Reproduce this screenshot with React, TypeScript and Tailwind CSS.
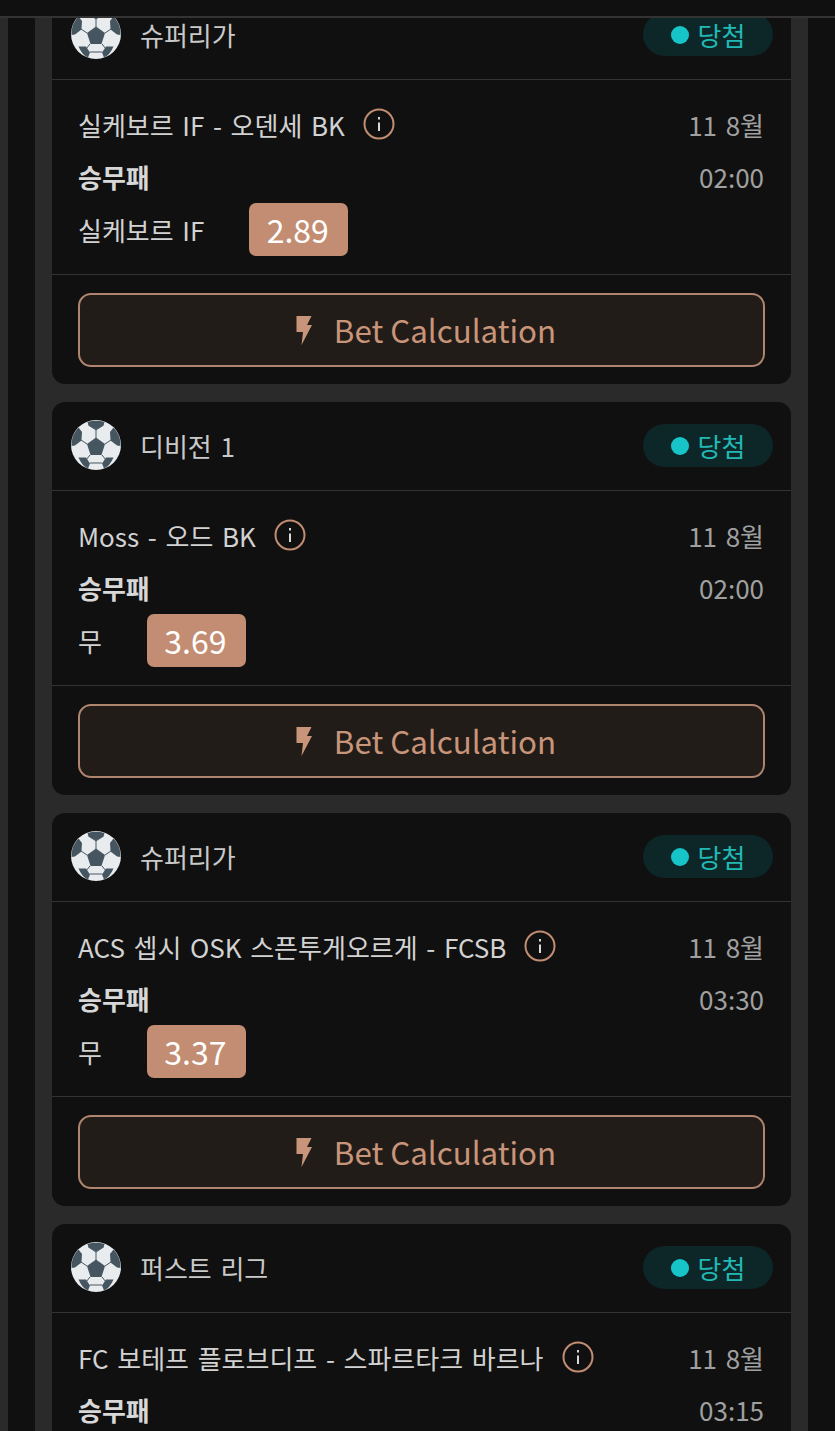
type Match = { league: string; title: string; time: string; pick?: string; odds?: string };

const matches: Match[] = [
  { league: '슈퍼리가', title: '실케보르 IF - 오덴세 BK', time: '02:00', pick: '실케보르 IF', odds: '2.89' },
  { league: '디비전 1', title: 'Moss - 오드 BK', time: '02:00', pick: '무', odds: '3.69' },
  { league: '슈퍼리가', title: 'ACS 셉시 OSK 스픈투게오르게 - FCSB', time: '03:30', pick: '무', odds: '3.37' },
  // last card runs off the bottom of the window
  { league: '퍼스트 리그', title: 'FC 보테프 플로브디프 - 스파르타크 바르나', time: '03:15' },
];

const SoccerBall = () => (
  <svg width="50" height="50" viewBox="0 0 50 50" className="shrink-0">
    <circle cx="25" cy="25" r="25" fill="#e9ecef" />
    <path d="M25 10L17.5 5M25 10L32.5 5M25 10V18M16 24L10 20M34 24L40 20M19 35L15 40M31 35L35 40M19 43H31" stroke="#465661" strokeWidth="1" />
    <path d="M25 17.5L34 24L30.5 35L19.5 35L16 24Z" fill="#465661" />
    <path d="M16.5 2Q25 -0.5 33.5 2L32.5 5.5L25 9.5L17.5 5.5Z" fill="#465661" />
    <path d="M7.5 7.5L11 12L10.5 20.5L4 25.5L0.5 26Q0 15 7.5 7.5Z" fill="#465661" />
    <path d="M42.5 7.5L39 12L39.5 20.5L46 25.5L49.5 26Q50 15 42.5 7.5Z" fill="#465661" />
    <path d="M7.5 37.5L15 37.5L19 43.5L17 48.5Q11 46 7.5 37.5Z" fill="#465661" />
    <path d="M42.5 37.5L35 37.5L31 43.5L33 48.5Q39 46 42.5 37.5Z" fill="#465661" />
  </svg>
);

const InfoIcon = () => (
  <svg width="32" height="32" viewBox="0 0 32 32" fill="none" className="shrink-0" stroke="#c28d72">
    <circle cx="16" cy="16" r="14.5" strokeWidth="2" />
    <path d="M16 14.5V23" strokeWidth="2" stroke="#d8d8d8" />
    <path d="M16 9V11.5" strokeWidth="2" stroke="#d8d8d8" />
  </svg>
);

const BoltIcon = () => (
  <svg width="16" height="29" viewBox="0 0 16 29" fill="#c8957a" className="shrink-0">
    <path d="M0.5 0H15.5L11 9H16L5.5 29L7 16H0.5Z" />
  </svg>
);

const MatchCard = ({ match }: { match: Match }) => (
  <div className="rounded-[13px] bg-[#101010]">
    <div className="flex h-[89px] items-center justify-between border-b border-[#333333] pb-[2px] pl-[19px] pr-[18px]">
      <div className="flex items-center gap-[19px]">
        <SoccerBall />
        <span className="text-[26px] text-[#c9c9c9]">{match.league}</span>
      </div>
      <div className="mt-[1px] flex h-[43px] w-[130px] items-center justify-center gap-[9px] rounded-full bg-[#0d2628]">
        <span className="h-[18px] w-[18px] rounded-full bg-[#17c5c8]" />
        <span className="text-[26px] leading-none text-[#22b8b4]">당첨</span>
      </div>
    </div>
    <div className="h-[195px] border-b border-[#333333] pl-[26px] pr-[27px] pt-[24px]">
      <div className="flex h-[40px] items-center justify-between">
        <div className="flex items-center gap-[18px]">
          <span className="text-[26px] text-[#d2d2d2]">{match.title}</span>
          <InfoIcon />
        </div>
        <span className="text-[26px] text-[#a0a0a0]">11 8월</span>
      </div>
      <div className="mt-[12px] flex h-[40px] items-center justify-between">
        <span className="text-[26px] font-bold text-[#d8d8d8]">승무패</span>
        <span className="text-[26px] text-[#a0a0a0]">{match.time}</span>
      </div>
      {match.pick && (
        <div className="mt-[7px] flex items-center gap-[45px]">
          <span className="text-[26px] text-[#d2d2d2]">{match.pick}</span>
          <span className="flex h-[53px] w-[99px] items-center justify-center rounded-[7px] bg-[#c28d72] pb-[2px] pr-[2px] text-[32px] text-white">
            {match.odds}
          </span>
        </div>
      )}
    </div>
    {match.pick && (
      <div className="px-[26px] pb-[17px] pt-[18px]">
        <button className="flex h-[74px] w-full items-center justify-center gap-[22px] rounded-[13px] border-2 border-[#b08570] bg-[#221c18] pl-[9px] text-[31.3px] text-[#c8957a]">
          <BoltIcon />
          <span>Bet Calculation</span>
        </button>
      </div>
    )}
  </div>
);

const App = () => {
  return (
    <div
      className="relative h-[1431px] w-[835px] overflow-hidden bg-[#101010] [word-spacing:2.8px]"
      style={{ fontFamily: '"Noto Sans CJK KR", "Noto Sans", sans-serif' }}
    >
      {/* top bar sits over the scrolled list */}
      <div className="absolute inset-x-0 top-0 z-10 h-[18px] border-b-2 border-[#333333] bg-[#101010]" />

      <div className="flex h-full">
        <div className="w-[8px] shrink-0 bg-[#2a2a2a]" />
        <div className="w-[27px] shrink-0" />
        <div className="-mt-[9px] flex w-[773px] shrink-0 flex-col gap-[18px] bg-[#2a2a2a] px-[17px]">
          {matches.map((match, i) => (
            <MatchCard key={i} match={match} />
          ))}
        </div>
      </div>
    </div>
  );
};

export default App;
